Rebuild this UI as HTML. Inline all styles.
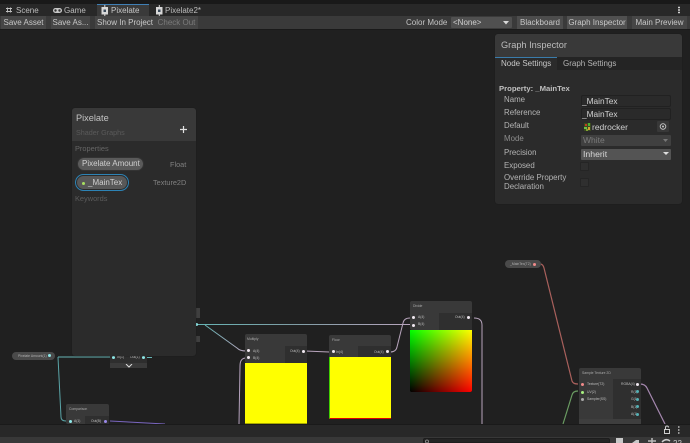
<!DOCTYPE html>
<html><head><meta charset="utf-8">
<style>
*{box-sizing:border-box;margin:0;padding:0}
html,body{width:690px;height:443px;overflow:hidden;background:#202020}
body{position:relative;font-family:"Liberation Sans",sans-serif;color:#c4c4c4}
#w{position:absolute;left:0;top:0;width:690px;height:443px;overflow:hidden;filter:blur(.3px)}
.a{position:absolute;white-space:nowrap}
.t{position:absolute;white-space:nowrap;font-size:8px;line-height:12px}
.btn{position:absolute;top:16px;height:13px;background:#464646;font-size:8px;line-height:13px;color:#c8c8c8;text-align:center;white-space:nowrap}
.node{position:absolute;background:#393939;border-radius:2px}
.s{position:absolute;font-size:3.4px;color:#bdbdbd;white-space:nowrap;line-height:5px}
.p{position:absolute;width:3px;height:3px;border-radius:50%}
.lbl{position:absolute;left:504px;font-size:7.9px;line-height:12px;color:#b4b4b4;white-space:nowrap}
.fld{position:absolute;left:581px;width:90px;height:12px;background:#2a2a2a;border:1px solid #212121;border-radius:2px;font-size:8.3px;line-height:11px;color:#d2d2d2;padding-left:0}
</style></head><body><div id="w">
<!-- tab bar -->
<div class="a" style="left:0;top:0;width:690px;height:4px;background:#191919"></div>
<div class="a" style="left:0;top:4px;width:690px;height:12px;background:#282828"></div>
<div class="a" style="left:97px;top:4px;width:52px;height:12px;background:#3a3a3a;border-top:1px solid #3f7fb5"></div>
<svg class="a" style="left:0;top:0" width="690" height="16">
<path d="M6 8.500h6M6 11.500h6M7.500 7.500v5M10.500 7.500v5" stroke="#c0c0c0" stroke-width=".9" fill="none"/>
<rect x="53" y="8" width="9" height="5" rx="2.500" fill="#c8c8c8"/><circle cx="55.500" cy="10.500" r="1.200" fill="#333"/><circle cx="59.500" cy="10.500" r="1.200" fill="#333"/>
<rect x="101.500" y="7" width="6.500" height="7.500" fill="#d8d8d8"/><path d="M104.800 5v11" stroke="#d8d8d8"/><rect x="103.500" y="9.500" width="2.500" height="2.500" fill="#3a4a5a"/>
<rect x="156" y="7" width="6.500" height="7.500" fill="#d8d8d8"/><path d="M159.300 5v11" stroke="#d8d8d8"/><rect x="158" y="9.500" width="2.500" height="2.500" fill="#3a4a5a"/>
<path d="M678 7.500h2M678 10h2M678 12.500h2" stroke="#d0d0d0" stroke-width="1.400"/>
</svg>
<div class="t" style="left:16px;top:5px;color:#bdbdbd">Scene</div>
<div class="t" style="left:64px;top:5px;color:#bdbdbd">Game</div>
<div class="t" style="left:111px;top:5px;color:#c8c8c8">Pixelate</div>
<div class="t" style="left:165px;top:5px;color:#bdbdbd">Pixelate2*</div>
<!-- toolbar -->
<div class="a" style="left:0;top:16px;width:690px;height:13px;background:#3a3a3a"></div>
<div class="btn" style="left:1px;width:45px">Save Asset</div>
<div class="btn" style="left:51px;width:39px">Save As...</div>
<div class="btn" style="left:95px;width:60px">Show In Project</div>
<div class="btn" style="left:155px;width:43px;color:#7b7b7b">Check Out</div>
<div class="t" style="left:406px;top:17px">Color Mode</div>
<div class="a" style="left:451px;top:17px;width:61px;height:11px;background:#505050;border-radius:1px;font-size:8px;line-height:11px;padding-left:2px;color:#d0d0d0">&lt;None&gt;</div>
<svg class="a" style="left:502px;top:21px" width="8" height="4"><path d="M1 0h6l-3 3.500z" fill="#d8d8d8"/></svg>
<div class="btn" style="left:517px;width:46px;background:#4c4c4c">Blackboard</div>
<div class="btn" style="left:567px;width:60px;background:#505050">Graph Inspector</div>
<div class="btn" style="left:632px;width:55px">Main Preview</div>
<div class="a" style="left:0;top:29px;width:690px;height:1px;background:#1a1a1a"></div>

<!-- wires -->
<svg class="a" style="left:0;top:0" width="690" height="443" fill="none">
<defs>
<linearGradient id="g1" gradientUnits="userSpaceOnUse" x1="197" y1="0" x2="411" y2="0"><stop offset="0" stop-color="#66b4b4"/><stop offset=".45" stop-color="#7f9da5"/><stop offset="1" stop-color="#b8a5bd"/></linearGradient>
<linearGradient id="g2" gradientUnits="userSpaceOnUse" x1="205" y1="325" x2="246" y2="351"><stop offset="0" stop-color="#66b4b4"/><stop offset="1" stop-color="#b8a5bd"/></linearGradient>
</defs>
<path d="M197 324.500H411" stroke="url(#g1)" stroke-width="1.100"/>
<path d="M205 325L237 348Q240 351 246 351" stroke="url(#g2)" stroke-width="1"/>
<path d="M58 357H113" stroke="#66b4b4" stroke-width="1"/>
<path d="M147 357.500h5" stroke="#66b4b4" stroke-width="1"/>
<path d="M58 357L61 417Q61 421 66 421" stroke="#5aa5a8" stroke-width="1"/>
<path d="M110 421L165 424" stroke="#7a66c0" stroke-width="1"/>
<path d="M239 424L240 366Q240 358 246 358" stroke="#b5a2bd" stroke-width="1"/>
<path d="M305 351L329 352" stroke="#b8a5bd" stroke-width="1"/>
<path d="M390 352Q396 352 397 347L403 323Q404 318 410 318" stroke="#b8a5bd" stroke-width="1"/>
<path d="M474 318Q482 318 482 325V424" stroke="#b8a5bd" stroke-width="1"/>
<path d="M540 264Q543 264 544 268L572 381Q573 384 578 384" stroke="#a9605c" stroke-width="1.200"/>
<path d="M578 391Q573 391 572 395L563 424" stroke="#6a9c62" stroke-width="1.200"/>
<path d="M640 384Q645 384 647 388L665 424" stroke="#a688b0" stroke-width="1.200"/>
</svg>

<!-- Multiply -->
<div class="node" style="left:245px;top:334px;width:62px;height:29px"></div>
<div class="a" style="left:285px;top:346px;width:22px;height:17px;background:#2f2f2f"></div>
<div class="s" style="left:247px;top:337px;color:#aaa">Multiply</div>
<div class="s" style="left:253px;top:349px">A(4)</div><div class="s" style="left:253px;top:356px">B(4)</div><div class="s" style="left:290px;top:349px">Out(4)</div>
<div class="p" style="left:247px;top:349px;background:#f0e8f0"></div><div class="p" style="left:247px;top:356px;background:#f0e8f0"></div><div class="p" style="left:302px;top:350px;background:#f0e8f0"></div>
<div class="a" style="left:245px;top:363px;width:62px;height:61px;background:#ffff00;border-bottom:1px solid #a8a800"></div>
<!-- Floor -->
<div class="node" style="left:329px;top:335px;width:62px;height:27px"></div>
<div class="a" style="left:358px;top:346px;width:33px;height:16px;background:#2f2f2f"></div>
<div class="s" style="left:332px;top:338px;color:#aaa">Floor</div>
<div class="s" style="left:336px;top:350px">In(4)</div><div class="s" style="left:374px;top:350px">Out(4)</div>
<div class="p" style="left:332px;top:350px;background:#f0e8f0"></div><div class="p" style="left:386px;top:350px;background:#f0e8f0"></div>
<div class="a" style="left:329px;top:357px;width:62px;height:62px;background:#ffff00;border-left:1px solid #40d000;border-bottom:1px solid #e00000"></div>
<!-- Divide -->
<div class="node" style="left:410px;top:301px;width:62px;height:29px"></div>
<div class="a" style="left:439px;top:313px;width:33px;height:17px;background:#2f2f2f"></div>
<div class="s" style="left:413px;top:304px;color:#aaa">Divide</div>
<div class="s" style="left:418px;top:315px">A(4)</div><div class="s" style="left:418px;top:322px">B(4)</div><div class="s" style="left:455px;top:315px">Out(4)</div>
<div class="p" style="left:412px;top:316px;background:#f0e8f0"></div><div class="p" style="left:412px;top:324px;background:#f0e8f0"></div><div class="p" style="left:467px;top:316px;background:#f0e8f0"></div>
<div class="a" style="left:410px;top:330px;width:62px;height:62px;background:linear-gradient(to right,#000,#ff0000);overflow:hidden;border-radius:0 0 2px 2px"><div style="position:absolute;inset:0;background:linear-gradient(to bottom,#00ff00,#000);mix-blend-mode:screen"></div></div>

<!-- one-minus node under blackboard -->
<div class="node" style="left:110px;top:352px;width:37px;height:16px;background:#2e2e2e"></div>
<div class="a" style="left:110px;top:363px;width:37px;height:5px;background:#3a3a3a"></div>
<div class="s" style="left:117px;top:355px">In(1)</div><div class="s" style="left:130px;top:355px">Out(1)</div>
<div class="p" style="left:112px;top:356px;background:#8fe8e8"></div><div class="p" style="left:142px;top:356px;background:#8fe8e8"></div>
<svg class="a" style="left:125px;top:364px" width="8" height="4"><path d="M1 0l3 3 3-3" stroke="#ddd" fill="none"/></svg>
<!-- Pixelate Amount pill -->
<div class="a" style="left:12px;top:352px;width:43px;height:8px;background:#4a4a4a;border-radius:4px"></div>
<div class="s" style="left:18px;top:354px;color:#b0b0b0">Pixelate Amount(1)</div>
<div class="p" style="left:48px;top:354px;background:#8fe8e8"></div>
<!-- Comparison -->
<div class="node" style="left:66px;top:404px;width:43px;height:20px"></div>
<div class="a" style="left:85px;top:416px;width:24px;height:8px;background:#2f2f2f"></div>
<div class="s" style="left:69px;top:407px;color:#aaa">Comparison</div>
<div class="s" style="left:74px;top:419px">A(1)</div><div class="s" style="left:91px;top:419px">Out(B)</div>
<div class="p" style="left:69px;top:420px;background:#8fe8e8"></div><div class="p" style="left:104px;top:420px;background:#9a88e8"></div>
<!-- _MainTex pill -->
<div class="a" style="left:505px;top:260px;width:36px;height:8px;background:#4a4a4a;border-radius:4px"></div>
<div class="s" style="left:510px;top:262px;color:#b0b0b0">_MainTex(T2)</div>
<div class="p" style="left:533px;top:263px;background:#f08a8a"></div>
<!-- Sample Texture -->
<div class="node" style="left:579px;top:368px;width:62px;height:56px"></div>
<div class="a" style="left:613px;top:379px;width:28px;height:40px;background:#2f2f2f"></div>
<div class="s" style="left:582px;top:371px;color:#aaa">Sample Texture 2D</div>
<div class="s" style="left:587px;top:382px">Texture(T2)</div><div class="s" style="left:587px;top:390px">UV(2)</div><div class="s" style="left:587px;top:397px">Sampler(SS)</div>
<div class="s" style="left:621px;top:382px">RGBA(4)</div><div class="s" style="left:631px;top:390px">R(1)</div><div class="s" style="left:631px;top:397px">G(1)</div><div class="s" style="left:631px;top:405px">B(1)</div><div class="s" style="left:631px;top:412px">A(1)</div>
<div class="p" style="left:581px;top:383px;background:#f08a8a"></div><div class="p" style="left:581px;top:391px;background:#a8f080"></div><div class="p" style="left:581px;top:398px;background:#aaa"></div>
<div class="p" style="left:636px;top:383px;background:#f0e8f0"></div><div class="p" style="left:636px;top:390px;background:#55b0b5"></div><div class="p" style="left:636px;top:398px;background:#55b0b5"></div><div class="p" style="left:636px;top:405px;background:#55b0b5"></div><div class="p" style="left:636px;top:413px;background:#55b0b5"></div>
<div class="a" style="left:579px;top:419px;width:62px;height:5px;background:#3e3e3e"></div>

<!-- master stack stubs behind blackboard -->
<div class="a" style="left:195px;top:308px;width:5px;height:10px;background:#3f3f3f"></div>
<div class="a" style="left:195px;top:336px;width:5px;height:6px;background:#3f3f3f"></div>
<div class="p" style="left:195px;top:323px;background:#8fe8e8"></div>

<!-- Blackboard -->
<div class="a" style="left:72px;top:108px;width:124px;height:248px;background:#2b2b2b;border-radius:3px;box-shadow:0 0 1px #161616"></div>
<div class="a" style="left:72px;top:108px;width:124px;height:33px;background:#393939;border-radius:3px 3px 0 0"></div>
<div class="a" style="left:76px;top:112px;font-size:9.2px;line-height:13px;color:#c4c4c4">Pixelate</div>
<div class="a" style="left:76px;top:127px;font-size:7.2px;line-height:11px;color:#5a5a5a">Shader Graphs</div>
<svg class="a" style="left:179px;top:125px" width="9" height="9"><path d="M4.500 1v7M1 4.500h7" stroke="#e0e0e0" stroke-width="1.200"/></svg>
<div class="a" style="left:75px;top:143px;font-size:7.400px;line-height:11px;color:#666">Properties</div>
<div class="a" style="left:77px;top:157px;width:67px;height:14px;background:#5a5a5a;border:1px solid #333;border-radius:7px;font-size:8px;line-height:12px;padding-left:4px;color:#d0d0d0">Pixelate Amount</div>
<div class="a" style="left:170px;top:159px;font-size:7.300px;line-height:11px;color:#808080">Float</div>
<div class="a" style="left:75px;top:174px;width:54px;height:17px;border:1.200px solid #2d83b5;border-radius:9px;background:#2b2b2b"></div>
<div class="a" style="left:77px;top:176px;width:50px;height:13px;background:#585858;border-radius:7px;font-size:8px;line-height:13px;padding-left:11px;color:#d0d0d0">_MainTex</div>
<div class="a" style="left:82px;top:182px;width:3px;height:3px;border-radius:50%;background:#a8e060"></div>
<div class="a" style="left:153px;top:177px;font-size:7.300px;line-height:11px;color:#808080">Texture2D</div>
<div class="a" style="left:75px;top:193px;font-size:7.400px;line-height:11px;color:#5c5c5c">Keywords</div>

<!-- Graph Inspector -->
<div class="a" style="left:495px;top:34px;width:187px;height:170px;background:#2b2b2b;border-radius:3px;box-shadow:0 0 1px #161616"></div>
<div class="a" style="left:495px;top:34px;width:187px;height:23px;background:#393939;border-radius:3px 3px 0 0"></div>
<div class="a" style="left:501px;top:39px;font-size:9.200px;line-height:13px;color:#bcbcbc">Graph Inspector</div>
<div class="a" style="left:495px;top:57px;width:187px;height:13px;background:#242424"></div>
<div class="a" style="left:495px;top:57px;width:62px;height:13px;background:#2b2b2b;border-top:1.500px solid #3a7cab"></div>
<div class="t" style="left:501px;top:57.500px;color:#c8c8c8">Node Settings</div>
<div class="t" style="left:563px;top:57.500px;color:#b4b4b4">Graph Settings</div>
<div class="a" style="left:499px;top:83px;font-size:7.700px;line-height:12px;font-weight:bold;color:#c0c0c0">Property: _MainTex</div>
<div class="lbl" style="top:94px">Name</div>
<div class="lbl" style="top:107px">Reference</div>
<div class="lbl" style="top:120px">Default</div>
<div class="lbl" style="top:133px;color:#8c8c8c">Mode</div>
<div class="lbl" style="top:147px">Precision</div>
<div class="lbl" style="top:160px">Exposed</div>
<div class="lbl" style="top:172px">Override Property</div>
<div class="lbl" style="top:181px">Declaration</div>
<div class="fld" style="top:95px">_MainTex</div>
<div class="fld" style="top:108px">_MainTex</div>
<svg class="a" style="left:584px;top:123px" width="7" height="8"><rect width="7" height="8" fill="#3a4a20"/><rect x="1" y="1" width="2" height="2" fill="#c04020"/><rect x="4" y="0" width="2" height="3" fill="#50b030"/><rect x="0" y="4" width="3" height="2" fill="#70c040"/><rect x="4" y="4" width="2" height="3" fill="#d0a030"/><rect x="2" y="6" width="2" height="2" fill="#80a030"/></svg>
<div class="a" style="left:592px;top:121px;font-size:8.500px;line-height:12px;color:#d0d0d0">redrocker</div>
<div class="a" style="left:657px;top:121px;width:12px;height:11px;background:#383838;border-radius:1px"></div>
<svg class="a" style="left:658px;top:122px" width="10" height="9" fill="none"><circle cx="5" cy="4.500" r="2.800" stroke="#c8c8c8" stroke-width=".9"/><circle cx="5" cy="4.500" r="1" fill="#c8c8c8"/></svg>
<div class="a" style="left:581px;top:135px;width:90px;height:11px;background:#404040;border-radius:1px;font-size:8.500px;line-height:11px;padding-left:2px;color:#7a7a7a">White</div>
<svg class="a" style="left:662px;top:139px" width="8" height="4"><path d="M1 0h5l-2.500 3z" fill="#777"/></svg>
<div class="a" style="left:581px;top:149px;width:90px;height:11px;background:#545454;border-radius:1px;font-size:8.700px;line-height:11px;padding-left:2px;color:#d8d8d8">Inherit</div>
<svg class="a" style="left:662px;top:152px" width="8" height="4"><path d="M1 0h6l-3 3z" fill="#ddd"/></svg>
<div class="a" style="left:580px;top:162px;width:9px;height:9px;background:#2f2f2f;border:1px solid #252525;border-radius:1px"></div>
<div class="a" style="left:580px;top:178px;width:9px;height:9px;background:#2f2f2f;border:1px solid #252525;border-radius:1px"></div>

<!-- bottom bar -->
<div class="a" style="left:0;top:424px;width:690px;height:13px;background:#282828;border-top:1px solid #1a1a1a"></div>
<div class="a" style="left:0;top:437px;width:690px;height:6px;background:#383838"></div>
<div class="a" style="left:423px;top:438px;width:187px;height:5px;background:#242424;border:1px solid #1d1d1d;border-radius:2px 2px 0 0"></div>
<svg class="a" style="left:0;top:424px" width="690" height="19" fill="none">
<rect x="664.500" y="5.500" width="5" height="4" stroke="#d0d0d0"/><path d="M665.500 5V3.500a1.500 1.500 0 0 1 3 0" stroke="#d0d0d0"/>
<path d="M678 3h1.500M678 6h1.500M678 9h1.500" stroke="#d8d8d8" stroke-width="1.300"/>
<circle cx="427" cy="17.500" r="1.500" stroke="#999" stroke-width=".8"/>
<rect x="616" y="14" width="7" height="5" fill="#c8c8c8"/>
<path d="M632 19l4-3h3v3z" fill="#c8c8c8"/>
<path d="M648 17h8M652 14v5" stroke="#bbb" stroke-width="1.500"/>
<path d="M662 18q4-4 8-1" stroke="#ccc" stroke-width="1.500"/>
</svg>
<div class="a" style="left:664px;top:437.500px;font-size:8px;line-height:11px;color:#c8c8c8;padding-left:9px;width:26px;height:6px;overflow:hidden">22</div>
</div></body></html>
